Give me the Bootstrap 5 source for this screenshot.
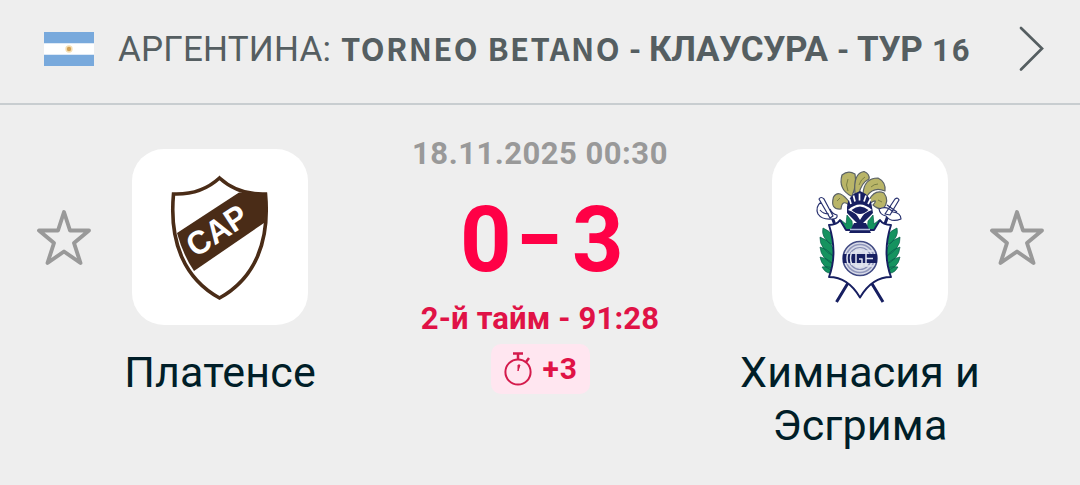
<!DOCTYPE html>
<html lang="ru">
<head>
<meta charset="utf-8">
<meta name="viewport" content="width=device-width, initial-scale=1">
<title>Платенсе – Химнасия и Эсгрима</title>
<link rel="stylesheet" href="https://cdn.jsdelivr.net/npm/bootstrap@5.3.0/dist/css/bootstrap.min.css">
<style>
body{background:#eee;font-family:Roboto,sans-serif;color:#001e28;height:485px;overflow:hidden}
.league{height:105px;border-bottom:2px solid #c8cdd0;color:#555e61;padding:0 36px 5px 44px;line-height:40px}
.flag{width:50px;height:34px;margin-right:24px}
.names{padding-top:3px}
.country{font-size:35px;font-weight:400;letter-spacing:.2px;width:223px}
.cyr{font-size:35px;font-weight:700;letter-spacing:-.3px}
.lat{font-size:31px;font-weight:700;letter-spacing:2px}
.comp{font-family:"Noto Sans CJK SC",sans-serif;letter-spacing:1.4px;line-height:1}
.side{width:300px;padding-top:44px}
.crest{width:176px;height:176px;border-radius:32px;background:#fff}
.team{font-size:43px;line-height:53px;margin-top:21px;letter-spacing:.15px;white-space:nowrap}
.fav{width:56px;height:58px;top:103px}
.middle{width:340px;padding-top:29px}
.date{font:700 31px/40px Roboto,sans-serif;color:#999;letter-spacing:.5px;white-space:nowrap}
.score{color:#ff0046;font:700 90px/90px Roboto,sans-serif;height:90px;margin-top:22px}
.digit{width:48px;text-align:center}
.dash{width:36px;margin:0 14px;display:flex;justify-content:center;transform:translateY(-4px) scaleX(1.42)}
.stage{color:#e01246;font:700 31px/40px Roboto,sans-serif;margin-top:13px;letter-spacing:.15px;white-space:nowrap}
.added{width:99px;height:50px;border-radius:10px;background:#ffe6f0;color:#e01246;margin-top:5px;font:700 30px/50px Roboto,sans-serif;padding-left:13px;letter-spacing:1px}
</style>
<script src="https://cdn.jsdelivr.net/npm/bootstrap@5.3.0/dist/js/bootstrap.bundle.min.js"></script>
</head>
<body>
<header class="league d-flex align-items-center justify-content-between">
  <div class="d-flex align-items-center">
    <svg class="flag" viewBox="0 0 50 34"><path fill="#78a9dc" d="M0 0h50v34H0z"/><path fill="#fff" d="M0 11.3h50v11.4H0z"/><circle cx="25" cy="17" r="3.7" fill="#f5dfb5"/><circle cx="25" cy="17" r="2.2" fill="#d4a255"/></svg>
    <div class="names d-flex align-items-baseline text-nowrap">
      <span class="country">АРГЕНТИНА:</span>
      <span class="lat comp" style="width:288px">TORNEO BETANO</span>
      <span class="lat" style="width:20px">-</span>
      <span class="cyr" style="width:188px">КЛАУСУРА</span>
      <span class="lat" style="width:20px">-</span>
      <span class="cyr" style="width:75px">ТУР</span>
      <span class="lat">16</span>
    </div>
  </div>
  <svg width="25" height="46" viewBox="0 0 25 46" fill="none" stroke="#555e61" stroke-width="2.7" stroke-linecap="round" class="flex-shrink-0"><path d="M2 2l21 20.500L2 43.500"/></svg>
</header>
<main class="d-flex justify-content-center position-relative">
  <svg class="fav position-absolute" style="left:36px" viewBox="0 0 56 58" fill="none" stroke="#999" stroke-width="3.900" stroke-linejoin="round"><path d="M28 4l6 18.500h19L38 35l6.500 20L28 43.500 11.500 55 18 35 3 22.500h19z"/></svg>
  <section class="side d-flex flex-column align-items-center">
    <svg class="crest" viewBox="0 0 176 176">
      <path d="M87.500 29Q69 46 41.500 45C37 94 53 130 87.500 149C122 130 138 94 133.500 45Q106 46 87.500 29z" fill="#fff" stroke="#4a2c17" stroke-width="3.600"/>
      <path d="M45 84L107 43.500L133.500 45Q135 61 132 74L62 122Q51 106 45 84z" fill="#4a2c17"/>
      <text transform="translate(63.500 109) rotate(-33)" font-family="Liberation Sans, sans-serif" font-weight="700" font-size="33" fill="#fff" textLength="66" lengthAdjust="spacingAndGlyphs">CAP</text>
    </svg>
    <div class="team">Платенсе</div>
  </section>
  <section class="middle d-flex flex-column align-items-center">
    <div class="date">18.11.2025 00:30</div>
    <div class="score d-flex align-items-center"><span class="digit">0</span><span class="dash">-</span><span class="digit">3</span></div>
    <div class="stage">2-й тайм - 91:28</div>
    <div class="added d-flex align-items-center">
      <svg width="28" height="36" viewBox="0 0 28 36" fill="none" stroke="#d41b4c" stroke-width="2"><circle cx="14" cy="21" r="12.600"/><path d="M9 2.500h10M14 3v5M22 11l3-4" stroke-width="2.500"/><path d="M14 14v6l2-6z" fill="#d41b4c" stroke-width="1"/></svg>
      <span style="margin-left:11px">+3</span>
    </div>
  </section>
  <section class="side d-flex flex-column align-items-center">
    <svg class="crest" viewBox="0 0 176 176" stroke-linejoin="round">
      <g stroke="#171f61" stroke-width="3"><path d="M76 134L64.500 153M99.500 134L111 153M60 68l3 8M115.500 68l-3 8"/></g>
      <g fill="#15935f" stroke="#0b5f4d" stroke-width=".7">
        <g id="leaves"><path d="M51 79q-3 11 13 19q1-13-13-19zM48 88q-1 12 15 20q0-14-15-20zM48 98q1 13 16 18q-2-14-16-18zM48 108q2 12 16 14q-3-12-16-14zM50 118q5 9 13 5q-4-7-13-5z"/></g>
        <use href="#leaves" transform="translate(176 0) scale(-1 1)"/>
        <path d="M69 71l5 4 1-9 5 6 1 11h-9zM107 71l-5 4-1-9-5 6-1 11h9z"/>
      </g>
      <path d="M57 76q8 0 11-5l6 10h28l6-10q3 5 11 5-9 28 0 52-19 0-31 20.500Q76 128 57 128q9-24 0-52z" fill="#fff" stroke="#171f61" stroke-width="1.900"/>
      <g fill="#b9b568" stroke="#5b6265" stroke-width="1.200">
        <path d="M79 47Q66 40 70 26Q76 21 83 25Q85 36 80 47z"/>
        <path d="M83 45Q81 24 92 22.500Q98 25 97 30Q89 34 87 45z"/>
        <path d="M91 45Q92 29 106 29Q114 33 113 42Q102 37 95 47z"/>
        <path d="M78 54Q67 39 61.500 48Q58 61 69 60Q70 50 77 56z"/>
        <path d="M97 51Q103 40 112 44Q118 52 111 60Q105 60 101 56Q107 49 98 54z"/>
      </g>
      <path d="M76 42q-3-6 0-12M87 36q2-6 6-8M99 38q3-3 7-3M65 52l3-3M106 51l4 2" fill="none" stroke="#69713b" stroke-width=".8"/>
      <path d="M75 58Q76 46 88 42Q99 46 100 58L101 64L88 77L75 64z" fill="#171f61"/>
      <path d="M79 55l-1.500-5M83 52.500l-1.500-6M87.500 51.500v-7M92 52.500l2-6M96 55l2.500-5" stroke="#fff" stroke-width="1.700"/>
      <path d="M76 61Q88 50 100 61Q92 63 88 71Q84 63 76 61z" fill="#fff"/><path d="M79.500 61Q88 54 96.500 61Q88 69 79.500 61z" fill="#171f61"/>
      <path d="M82 74h12l5 10H77z" fill="#171f61"/><path d="M78 80.500h20" stroke="#aeb8da" stroke-width="1.700"/>
      <g fill="#fff" stroke="#29326f" stroke-width="1.200"><path d="M49 53q-6 5-3 12 4 6 14 5 6 0 5-4-5-1-7-6M47 50q2-3 5 0l9 17-3 2zM48 61q3 4 9 4"/><path d="M107 60q8-4 14 3 8 1 8 7-10 4-15-3-6-1-7-7zM113 65l10-15q3-2 4 1l-9 15zM115 56l10 7"/></g>
      <circle cx="88" cy="109.500" r="17" fill="#d9dce9" stroke="#424b84" stroke-width="1.600"/>
      <circle cx="88" cy="109.500" r="14" fill="none" stroke="#9298bd" stroke-width="1.500"/>
      <circle cx="88" cy="109.500" r="11" fill="none" stroke="#858cb5" stroke-width="1.200"/>
      <path d="M71 105h34v9H71z" fill="#171f61"/>
      <path d="M76 104q-2 5 0 11M80 103q-3 6 0 13M90 102h-6v15h6v-7h-3M101 102h-7v15h7M94 109.500h7" fill="none" stroke="#e3e6f1" stroke-width="1.500"/>
    </svg>
    <div class="team text-center">Химнасия и<br>Эсгрима</div>
  </section>
  <svg class="fav position-absolute" style="right:35px" viewBox="0 0 56 58" fill="none" stroke="#999" stroke-width="3.900" stroke-linejoin="round"><path d="M28 4l6 18.500h19L38 35l6.500 20L28 43.500 11.500 55 18 35 3 22.500h19z"/></svg>
</main>
</body>
</html>
